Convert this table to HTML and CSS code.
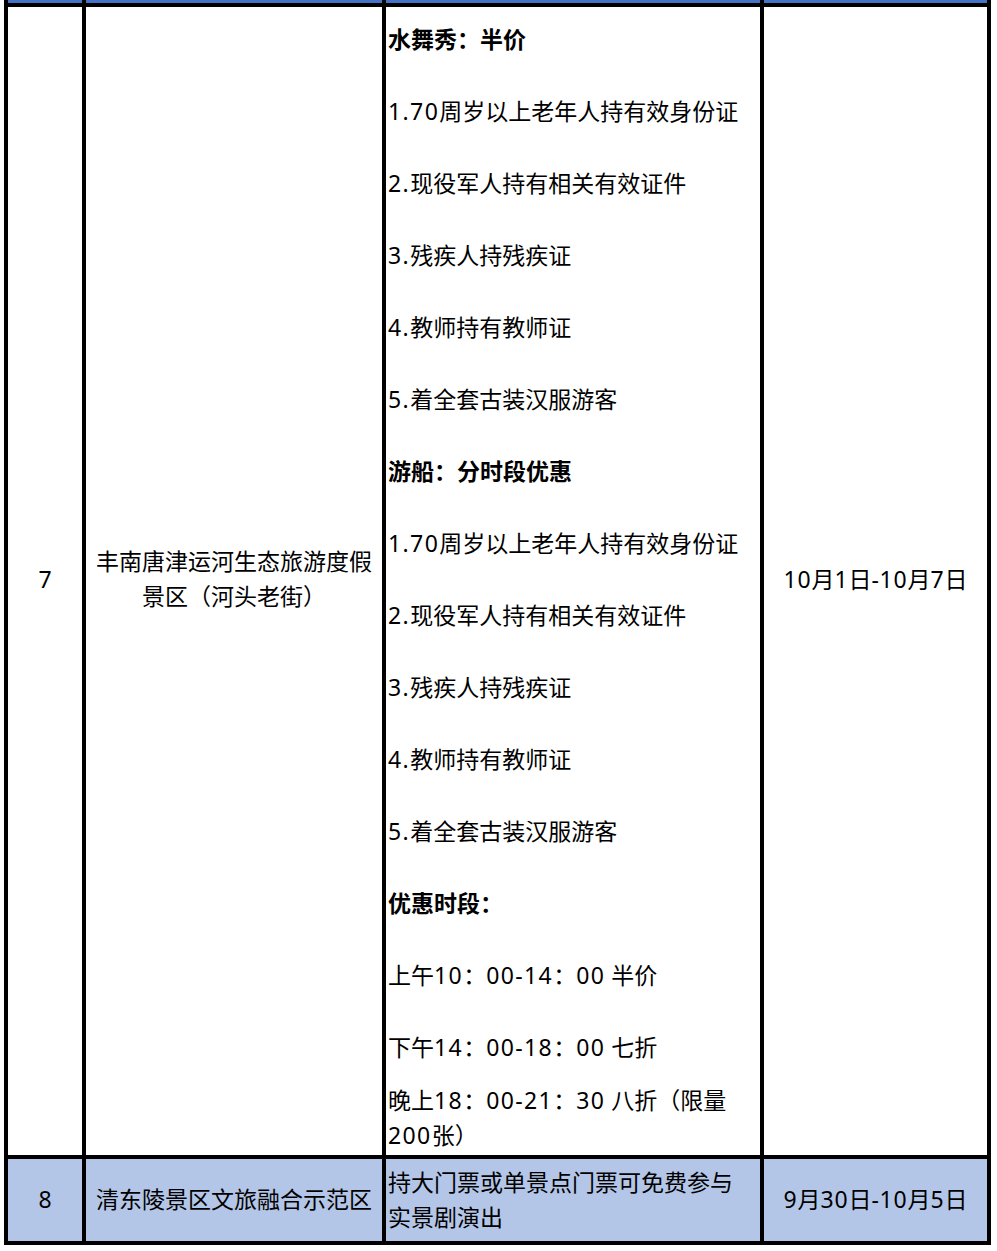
FILE: index.html
```html
<!DOCTYPE html>
<html lang="zh-CN">
<head>
<meta charset="utf-8">
<title>优惠活动</title>
<link rel="stylesheet" href="styles.css">
</head>
<body>
<div class="wrap">
<table class="grid">
  <colgroup>
    <col class="c1"><col class="c2"><col class="c3"><col class="c4">
  </colgroup>
  <tr class="row-head">
    <td></td><td></td><td></td><td></td>
  </tr>
  <tr class="row-main">
    <td class="center">7</td>
    <td class="center">丰南唐津运河生态旅游度假景区（河头老街）</td>
    <td class="detail">
      <p class="b">水舞秀：半价</p>
      <p><span class="n">1.70</span>周岁以上老年人持有效身份证</p>
      <p><span class="n">2.</span>现役军人持有相关有效证件</p>
      <p><span class="n">3.</span>残疾人持残疾证</p>
      <p><span class="n">4.</span>教师持有教师证</p>
      <p><span class="n">5.</span>着全套古装汉服游客</p>
      <p class="b">游船：分时段优惠</p>
      <p><span class="n">1.70</span>周岁以上老年人持有效身份证</p>
      <p><span class="n">2.</span>现役军人持有相关有效证件</p>
      <p><span class="n">3.</span>残疾人持残疾证</p>
      <p><span class="n">4.</span>教师持有教师证</p>
      <p><span class="n">5.</span>着全套古装汉服游客</p>
      <p class="b">优惠时段：</p>
      <p>上午<span class="n">10</span>：<span class="n">00-14</span>：<span class="n">00</span> 半价</p>
      <p class="near">下午<span class="n">14</span>：<span class="n">00-18</span>：<span class="n">00</span> 七折</p>
      <p class="last">晚上<span class="n">18</span>：<span class="n">00-21</span>：<span class="n">30</span> 八折（限量<span class="n">200</span>张）</p>
    </td>
    <td class="center"><span class="d">10</span>月<span class="d">1</span>日<span class="d">-10</span>月<span class="d">7</span>日</td>
  </tr>
  <tr class="row-alt">
    <td class="center">8</td>
    <td class="center">清东陵景区文旅融合示范区</td>
    <td class="detail-alt">持大门票或单景点门票可免费参与实景剧演出</td>
    <td class="center"><span class="d">9</span>月<span class="d">30</span>日<span class="d">-10</span>月<span class="d">5</span>日</td>
  </tr>
</table>
</div>
</body>
</html>
```

FILE: styles.css
```css
html, body {
  margin: 0;
  padding: 0;
  background: #ffffff;
}

.wrap {
  padding-left: 4px;
  overflow: hidden;
  height: 1251px;
}

.grid {
  margin-top: -10px;
  width: 987px;
  table-layout: fixed;
  border-collapse: separate;
  border-spacing: 0;
  border-left: 4px solid #000;
  border-top: 4px solid #000;
  font-family: "Noto Sans", "Noto Sans CJK SC", sans-serif;
  font-size: 23px;
  color: #000;
}

.c1 { width: 78px; }
.c2 { width: 300px; }
.c3 { width: 378px; }
.c4 { width: 227px; }

.grid td {
  border-right: 4px solid #000;
  border-bottom: 4px solid #000;
  padding: 0;
  vertical-align: middle;
}

.row-head td {
  height: 9px;
  background: #4472c4;
  font-size: 0;
  line-height: 0;
}

.row-main td {
  line-height: 35px;
}

.n {
  letter-spacing: 1.4px;
}

.d {
  letter-spacing: 0.8px;
}

.center {
  text-align: center;
}

.row-main .center {
  padding: 0 4px 4px;
}

.detail {
  padding: 14px 12px 2px 2px !important;
  vertical-align: top !important;
}

.detail p {
  margin: 0 0 36px 0;
  line-height: 36px;
}

.detail p.b {
  font-weight: 700;
}

.detail p.near {
  margin-bottom: 18px;
}

.detail p.last {
  margin: 0;
  line-height: 35px;
}

.row-alt td {
  background: #b4c6e7;
  line-height: 35px;
  padding: 5px 0 7px;
}

.row-alt .detail-alt {
  padding: 6px 12px 6px 2px;
  text-align: left;
}
```
